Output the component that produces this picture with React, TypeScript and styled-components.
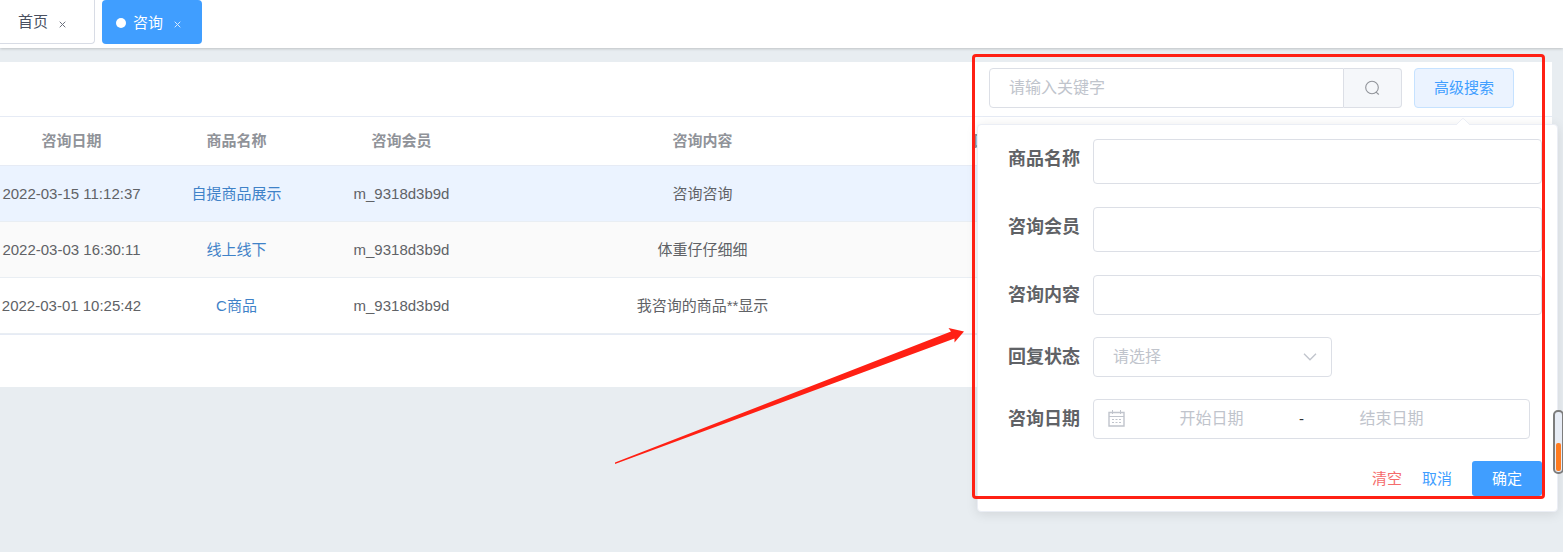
import React from "react";
import styled, { createGlobalStyle, css } from "styled-components";

const Global = createGlobalStyle`
  * { box-sizing: border-box; }
  body {
    margin: 0;
    min-height: 100vh;
    overflow: hidden;
    background: #e8edf1;
    color: #606266;
    font: 15px/20px "Liberation Sans", "Noto Sans CJK SC", sans-serif;
  }
  button, input, select { font: inherit; }
`;

const Page = styled.div`
  position: relative;
  min-height: 100vh;
  overflow: hidden;
`;

const TabBar = styled.nav`
  display: flex;
  gap: 7px;
  height: 48px;
  background: #fff;
  box-shadow: 0 1px 3px rgba(0, 0, 0, 0.12), 0 0 3px rgba(0, 0, 0, 0.12);
`;

const Tab = styled.a<{ $active?: boolean }>`
  display: flex;
  align-items: center;
  height: 44px;
  padding: 1px 28px 0 18px;
  border: 1px solid #d8dce5;
  border-width: 0 1px 1px 0;
  border-radius: 0 0 4px 0;
  background: #fff;
  color: #495060;
  text-decoration: none;
  ${(p) =>
    p.$active &&
    css`
      padding: 1px 21px 0 14px;
      border: 0;
      border-radius: 4px;
      background: #409eff;
      color: #fff;
    `}
`;

const Dot = styled.span`
  width: 10px;
  height: 10px;
  margin-right: 7px;
  border-radius: 50%;
  background: #fff;
`;

const CloseIcon = styled.svg`
  width: 7px;
  height: 7px;
  margin: 4px 0 0 11px;
  fill: none;
  stroke: currentColor;
  opacity: 0.8;
`;

const Panel = styled.main`
  margin: 14px 11px 0 0;
  padding-bottom: 52px;
  background: #fff;
`;

const Toolbar = styled.div`
  display: flex;
  justify-content: flex-end;
  gap: 12px;
  height: 55px;
  padding: 6px 38px 0 0;
  border-bottom: 1px solid #e6ebf5;
`;

const SearchForm = styled.form`
  display: flex;
  width: 413px;
  height: 40px;
`;

const fieldBox = css`
  border: 1px solid #dcdfe6;
  border-radius: 4px;
  background: #fff;
  color: #606266;
  outline: none;
  &::placeholder { color: #c0c4cc; opacity: 1; }
`;

const SearchInput = styled.input`
  ${fieldBox}
  flex: 1;
  min-width: 0;
  padding: 0 19px;
  border-radius: 4px 0 0 4px;
  font-size: 16px;
`;

const SearchButton = styled.button`
  display: flex;
  align-items: center;
  justify-content: center;
  width: 58px;
  padding: 0;
  border: 1px solid #dcdfe6;
  border-left: 0;
  border-radius: 0 4px 4px 0;
  background: #f5f7fa;
  color: #909399;
`;

const AdvancedButton = styled.button`
  width: 100px;
  height: 40px;
  padding: 0;
  border: 1px solid #c6e2ff;
  border-radius: 4px;
  background: #ebf3ff;
  color: #409eff;
`;

const TableClip = styled.div`
  overflow: hidden;
`;

const Table = styled.table`
  width: calc(100% + 11px);
  margin-left: -11px;
  table-layout: fixed;
  border-collapse: separate;
  border-spacing: 0;
  border-bottom: 1px solid #e6ebf5;
`;

const HeadCell = styled.th`
  height: 49px;
  padding: 0;
  border-bottom: 1px solid #e6ebf5;
  color: #909399;
  font-weight: 700;
`;

const Row = styled.tr<{ $tone?: string }>`
  background: ${(p) => p.$tone ?? "#fff"};
`;

const Cell = styled.td`
  height: 56px;
  padding: 0;
  border-bottom: 1px solid #e9eef3;
  text-align: center;
`;

const GoodsLink = styled.a`
  color: #3f82c8;
  text-decoration: none;
`;

const Popover = styled.form`
  position: absolute;
  top: 124px;
  right: 5px;
  width: 581px;
  padding: 14px 15px 15px;
  border: 1px solid #ebeef5;
  border-radius: 4px;
  background: #fff;
  box-shadow: 0 2px 12px rgba(0, 0, 0, 0.1);
`;

const PopoverArrow = styled.svg`
  position: absolute;
  top: -7px;
  right: 87px;
  width: 14px;
  height: 8px;
`;

const Field = styled.div<{ $tall?: boolean }>`
  display: flex;
  align-items: flex-start;
  height: ${(p) => (p.$tall ? 68 : 62)}px;
`;

const FieldLabel = styled.label`
  width: 100px;
  padding-left: 15px;
  flex: none;
  font-size: 18px;
  font-weight: 700;
  line-height: 40px;
  white-space: nowrap;
`;

const TextInput = styled.input<{ $tall?: boolean }>`
  ${fieldBox}
  flex: 1;
  min-width: 0;
  height: ${(p) => (p.$tall ? 45 : 40)}px;
  padding: 0 15px;
`;

const SelectWrap = styled.div`
  display: grid;
  width: 239px;
  align-items: center;
  & > * { grid-area: 1 / 1; }
`;

const Select = styled.select`
  ${fieldBox}
  height: 40px;
  padding: 0 19px;
  appearance: none;
  font-size: 16px;
  color: #c0c4cc;
`;

const Chevron = styled.svg`
  justify-self: end;
  width: 14px;
  height: 8px;
  margin-right: 15px;
  pointer-events: none;
`;

const DateRange = styled.div`
  ${fieldBox}
  display: flex;
  align-items: center;
  width: 437px;
  height: 40px;
  padding-left: 14px;
`;

const CalendarIcon = styled.svg`
  width: 17px;
  height: 17px;
  margin-bottom: 2px;
  fill: none;
  stroke: #c0c4cc;
`;

const DateInput = styled.input`
  width: 173px;
  padding: 0;
  border: 0;
  outline: 0;
  background: none;
  text-align: center;
  font-size: 16px;
  &::placeholder { color: #c0c4cc; opacity: 1; }
`;

const Dash = styled.span`
  width: 7px;
  text-align: center;
  color: #303133;
`;

const Actions = styled.div`
  display: flex;
  justify-content: flex-end;
`;

const TextButton = styled.button<{ $danger?: boolean }>`
  height: 35px;
  padding: 0;
  margin-right: 20px;
  border: 0;
  background: none;
  color: ${(p) => (p.$danger ? "#f56c6c" : "#409eff")};
`;

const ConfirmButton = styled.button`
  width: 70px;
  height: 35px;
  padding: 0;
  border: 0;
  border-radius: 3px;
  background: #409eff;
  color: #fff;
`;

const Highlight = styled.div`
  position: absolute;
  top: 54px;
  right: 18px;
  width: 573px;
  height: 445px;
  border: 3px solid #ff2014;
  border-radius: 4px;
  pointer-events: none;
`;

const Pointer = styled.svg`
  position: absolute;
  top: 326px;
  right: 598px;
  width: 352px;
  height: 140px;
  pointer-events: none;
`;

const Gauge = styled.div`
  position: absolute;
  top: 410px;
  right: -1px;
  display: flex;
  align-items: flex-end;
  width: 11px;
  height: 64px;
  padding: 1px;
  border: 2px solid #7d7d7d;
  border-radius: 5px;
  background: #e8edf6;
`;

const GaugeFill = styled.div`
  flex: 1;
  height: 28px;
  border-radius: 2px;
  background: #ff7b20;
`;

const rows = [
  { date: "2022-03-15 11:12:37", goods: "自提商品展示", member: "m_9318d3b9d", text: "咨询咨询", tone: "#ebf3ff" },
  { date: "2022-03-03 16:30:11", goods: "线上线下", member: "m_9318d3b9d", text: "体重仔仔细细", tone: "#fafafa" },
  { date: "2022-03-01 10:25:42", goods: "C商品", member: "m_9318d3b9d", text: "我咨询的商品**显示" },
];

const Close = () => (
  <CloseIcon viewBox="0 0 7 7" aria-hidden="true">
    <path d="M.7.7l5.600 5.600M6.300.7L.7 6.300" />
  </CloseIcon>
);

export default function App() {
  return (
    <Page>
      <Global />
      <TabBar>
        <Tab href="#home">首页<Close /></Tab>
        <Tab href="#consult" $active><Dot />咨询<Close /></Tab>
      </TabBar>

      <Panel>
        <Toolbar>
          <SearchForm>
            <SearchInput aria-label="请输入关键字" placeholder="请输入关键字" />
            <SearchButton type="button" aria-label="搜索">
              <svg width="16" height="16" viewBox="0 0 16 16" fill="none" stroke="currentColor" strokeWidth="1.1" aria-hidden="true">
                <circle cx="7" cy="7.500" r="6.300" />
                <path d="M10.800 11.800l3 2.700" />
              </svg>
            </SearchButton>
          </SearchForm>
          <AdvancedButton type="button">高级搜索</AdvancedButton>
        </Toolbar>
        <TableClip>
          <Table>
            <colgroup>
              <col width="165" />
              <col width="165" />
              <col width="165" />
              <col />
              <col width="165" />
              <col width="466" />
            </colgroup>
            <thead>
              <tr>
                <HeadCell>咨询日期</HeadCell>
                <HeadCell>商品名称</HeadCell>
                <HeadCell>咨询会员</HeadCell>
                <HeadCell>咨询内容</HeadCell>
                <HeadCell>回复状态</HeadCell>
                <HeadCell />
              </tr>
            </thead>
            <tbody>
              {rows.map((r) => (
                <Row key={r.date} $tone={r.tone}>
                  <Cell>{r.date}</Cell>
                  <Cell><GoodsLink href="#goods">{r.goods}</GoodsLink></Cell>
                  <Cell>{r.member}</Cell>
                  <Cell>{r.text}</Cell>
                  <Cell />
                  <Cell />
                </Row>
              ))}
            </tbody>
          </Table>
        </TableClip>
      </Panel>

      <Popover>
        <PopoverArrow viewBox="0 0 14 8" aria-hidden="true">
          <path d="M0 7.5L6 1q1-1 2 0l6 6.5V8H0z" fill="#fff" />
          <path d="M0 7L6 1q1-1 2 0l6 6" fill="none" stroke="#ebeef5" />
        </PopoverArrow>
        <Field $tall>
          <FieldLabel htmlFor="goods">商品名称</FieldLabel>
          <TextInput id="goods" $tall />
        </Field>
        <Field $tall>
          <FieldLabel htmlFor="member">咨询会员</FieldLabel>
          <TextInput id="member" $tall />
        </Field>
        <Field>
          <FieldLabel htmlFor="content">咨询内容</FieldLabel>
          <TextInput id="content" />
        </Field>
        <Field>
          <FieldLabel htmlFor="status">回复状态</FieldLabel>
          <SelectWrap>
            <Select id="status" defaultValue="">
              <option value="">请选择</option>
            </Select>
            <Chevron viewBox="0 0 14 8" aria-hidden="true">
              <path d="M1 .8l6 6 6-6" fill="none" stroke="#c0c4cc" strokeWidth="1.3" />
            </Chevron>
          </SelectWrap>
        </Field>
        <Field>
          <FieldLabel htmlFor="start">咨询日期</FieldLabel>
          <DateRange>
            <CalendarIcon viewBox="0 0 17 17" aria-hidden="true">
              <path d="M1 2.500h15v13.500H1z" strokeWidth="1.4" />
              <path d="M1 6.500h15M4.500 0v4M12.500 0v4" />
              <path d="M4 9.500h2M7.500 9.500h2M11 9.500h2M4 12.500h2M7.500 12.500h2M11 12.500h2" />
            </CalendarIcon>
            <DateInput id="start" placeholder="开始日期" />
            <Dash>-</Dash>
            <DateInput aria-label="结束日期" placeholder="结束日期" />
          </DateRange>
        </Field>
        <Actions>
          <TextButton type="button" $danger>清空</TextButton>
          <TextButton type="button">取消</TextButton>
          <ConfirmButton type="button">确定</ConfirmButton>
        </Actions>
      </Popover>

      <Highlight />
      <Pointer viewBox="0 0 352 140" aria-hidden="true">
        <path d="M2 136.500L338 5.500l-2.500-3.500L351 5.500 341.500 16.500V12.500L2 138z" fill="#ff2014" />
      </Pointer>
      <Gauge>
        <GaugeFill />
      </Gauge>
    </Page>
  );
}
